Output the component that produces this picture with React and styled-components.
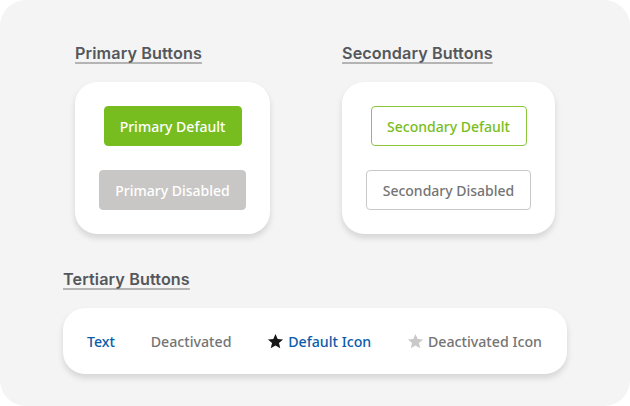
import React from "react";
import styled, { createGlobalStyle } from "styled-components";

const Global = createGlobalStyle`
  html, body { margin: 0; padding: 0; background: #ffffff; }
  * { box-sizing: border-box; }
`;

const Panel = styled.div`
  width: 630px;
  height: 406px;
  background: #f4f4f4;
  border-radius: 26px;
  padding: 42px 0 0 0;
  display: flex;
  flex-direction: column;
`;

const TopRow = styled.div`
  display: flex;
  gap: 72px;
  padding-left: 75px;
`;

const Section = styled.section`
  display: flex;
  flex-direction: column;
  align-items: flex-start;
  gap: 18px;
`;

const Heading = styled.h2`
  margin: 0;
  font-family: "Inter", "Open Sans", sans-serif;
  font-weight: 600;
  font-size: 16.2px;
  letter-spacing: 0.1px;
  line-height: 22px;
  color: #54575b;
  text-decoration: underline;
  text-decoration-color: #b4b4b4;
  text-decoration-thickness: 2px;
  text-underline-offset: 3px;
`;

const Card = styled.div`
  width: ${(p) => p.$w}px;
  background: #ffffff;
  border-radius: 22px;
  box-shadow: 0 4px 6px rgba(0, 0, 0, 0.13);
  padding: 24px;
  display: flex;
  flex-direction: column;
  align-items: center;
  gap: 24px;
`;

const Button = styled.button`
  height: 40px;
  width: ${(p) => p.$w}px;
  border-radius: 4px;
  font-family: "Noto Sans", "Open Sans", sans-serif;
  font-weight: 500;
  font-size: 14px;
  display: flex;
  align-items: center;
  justify-content: center;
  padding: 0;
  cursor: pointer;
  background: ${(p) => p.$bg};
  color: ${(p) => p.$fg};
  border: 1px solid ${(p) => p.$border};
`;

const Bottom = styled.div`
  padding: 34px 0 0 63px;
`;

const Bar = styled.div`
  width: 504px;
  height: 66px;
  background: #ffffff;
  border-radius: 22px;
  box-shadow: 0 4px 6px rgba(0, 0, 0, 0.13);
  display: flex;
  align-items: center;
  justify-content: space-between;
  padding: 0 25px 0 24px;
`;

const Tertiary = styled.span`
  display: inline-flex;
  align-items: center;
  gap: 4px;
  font-family: "Noto Sans", "Open Sans", sans-serif;
  font-weight: 500;
  font-size: 14.2px;
  color: ${(p) => p.$fg};
`;

const Star = ({ color }) => (
  <svg width="17" height="17" viewBox="0 0 24 24">
    <path
      d="M12 1.5l3.1 7.1 7.6.6-5.8 5 1.8 7.5L12 17.7l-6.7 4 1.8-7.5-5.8-5 7.6-.6z"
      fill={color}
    />
  </svg>
);

export default function App() {
  return (
    <>
      <Global />
      <Panel>
        <TopRow>
          <Section>
            <Heading>Primary Buttons</Heading>
            <Card $w={195}>
              <Button $w={138} $bg="#78bd20" $fg="#ffffff" $border="#78bd20">
                Primary Default
              </Button>
              <Button $w={147} $bg="#c9c7c5" $fg="#ffffff" $border="#c9c7c5">
                Primary Disabled
              </Button>
            </Card>
          </Section>
          <Section>
            <Heading>Secondary Buttons</Heading>
            <Card $w={213}>
              <Button $w={156} $bg="#ffffff" $fg="#78bd20" $border="#8cc63f">
                Secondary Default
              </Button>
              <Button $w={165} $bg="#ffffff" $fg="#747474" $border="#c9c9c9">
                Secondary Disabled
              </Button>
            </Card>
          </Section>
        </TopRow>
        <Bottom>
          <Section>
            <Heading>Tertiary Buttons</Heading>
            <Bar>
              <Tertiary $fg="#0b5cab">Text</Tertiary>
              <Tertiary $fg="#747474">Deactivated</Tertiary>
              <Tertiary $fg="#0b5cab">
                <Star color="#181818" />
                Default Icon
              </Tertiary>
              <Tertiary $fg="#747474">
                <Star color="#c9c9c9" />
                Deactivated Icon
              </Tertiary>
            </Bar>
          </Section>
        </Bottom>
      </Panel>
    </>
  );
}
